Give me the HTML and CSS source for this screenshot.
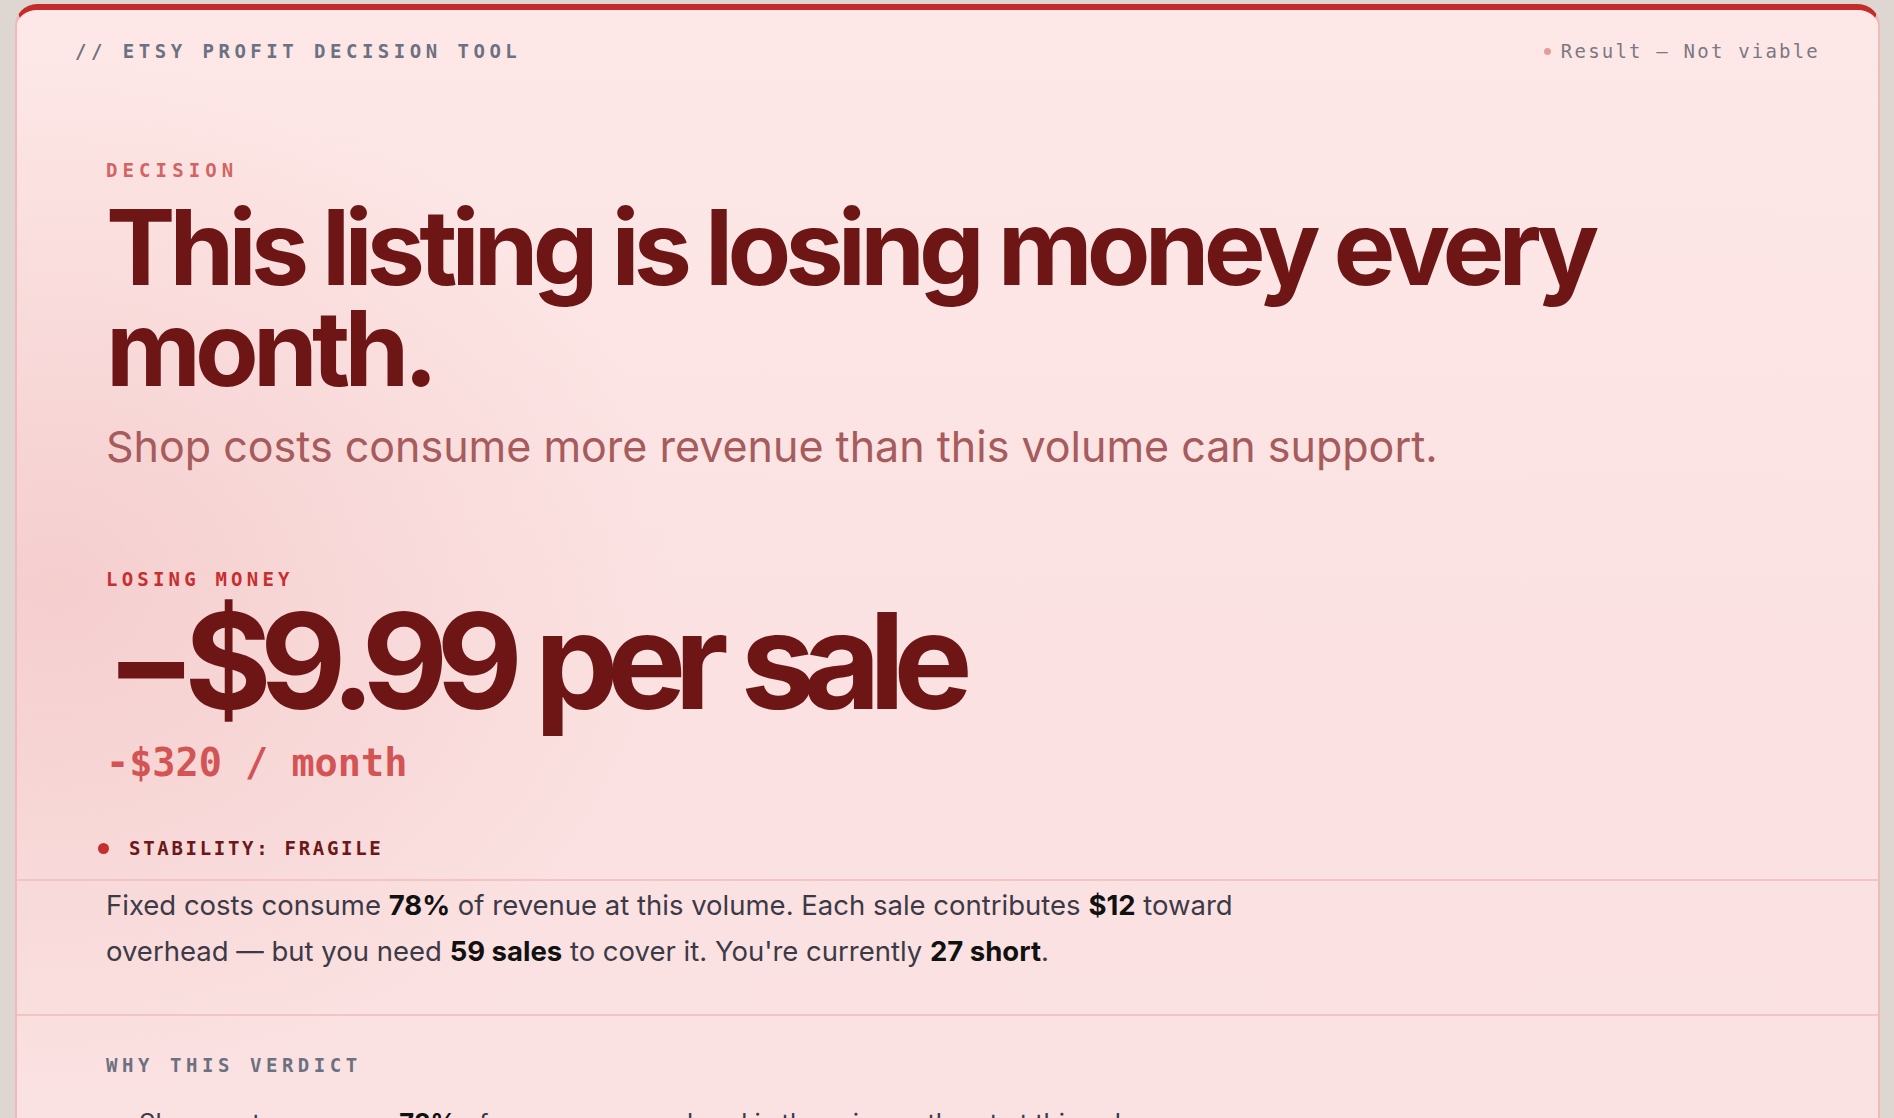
FILE: index.html
```html
<!DOCTYPE html>
<html lang="en">
<head>
<meta charset="utf-8">
<title>Etsy Profit Decision Tool</title>
<link rel="stylesheet" href="styles.css">
</head>
<body>
<main class="card">
  <header class="topbar">
    <div class="brand">// ETSY PROFIT DECISION TOOL</div>
    <div class="status"><span class="status-dot"></span>Result — Not viable</div>
  </header>

  <section class="decision">
    <div class="eyebrow">DECISION</div>
    <h1 class="headline">This listing is losing money every month.</h1>
    <p class="subline">Shop costs consume more revenue than this volume can support.</p>

    <div class="money-label">LOSING MONEY</div>
    <div class="big-number">−$9.99 per sale</div>
    <div class="monthly">-$320 / month</div>

    <div class="stability"><span class="stability-dot"></span>STABILITY: FRAGILE</div>
  </section>

  <section class="explain">
    <p>Fixed costs consume <b>78%</b> of revenue at this volume. Each sale contributes <b>$12</b> toward overhead — but you need <b>59 sales</b> to cover it. You're currently <b>27 short</b>.</p>
  </section>

  <section class="why">
    <div class="why-label">WHY THIS VERDICT</div>
    <ul class="why-list">
      <li>Shop costs consume <b>78%</b> of revenue — overhead is the primary threat at this volume.</li>
    </ul>
  </section>
</main>
</body>
</html>
```

FILE: styles.css
```css
html, body {
  height: 100%;
}
body {
  margin: 0;
  padding: 4px 14px 0 15px;
  background: #ddd6d1;
  font-family: Inter, "Noto Sans", sans-serif;
  box-sizing: border-box;
  overflow: hidden;
}
.card {
  min-height: 1200px;
  border: 2px solid #f1baba;
  border-top: 6px solid #c42b2b;
  border-radius: 22px 22px 0 0;
  background:
    radial-gradient(ellipse 620px 520px at 2% 48%, rgba(240, 190, 190, 0.55), rgba(240, 190, 190, 0) 100%),
    linear-gradient(180deg, #fde8e7 0%, #fbe1e1 60%, #fbe2e2 100%);
  box-sizing: border-box;
}
.topbar {
  display: flex;
  justify-content: space-between;
  align-items: center;
  padding: 29px 58px 0 58px;
  height: 24px;
}
.brand {
  font-family: "DejaVu Sans Mono", monospace;
  font-weight: bold;
  font-size: 19px;
  letter-spacing: 4.5px;
  color: #6c7181;
  line-height: 24px;
}
.status {
  display: flex;
  align-items: center;
  gap: 10px;
  font-family: "DejaVu Sans Mono", monospace;
  font-size: 19px;
  letter-spacing: 2.2px;
  color: #7b7883;
  line-height: 24px;
}
.status-dot {
  width: 7px;
  height: 7px;
  border-radius: 50%;
  background: #e39c9c;
}
.decision {
  padding: 0 90px 19px 89px;
  border-bottom: 2px solid #f3c4c4;
}
.eyebrow {
  margin-top: 95px;
  font-family: "DejaVu Sans Mono", monospace;
  font-weight: bold;
  font-size: 19px;
  letter-spacing: 5.1px;
  color: #d46464;
  line-height: 24px;
}
.headline {
  margin: 15px 0 0 0;
  font-family: Inter, sans-serif;
  font-weight: 700;
  font-size: 104px;
  line-height: 101px;
  letter-spacing: -0.056em;
  color: #6e1616;
  max-width: 1560px;
}
.subline {
  margin: 22px 0 0 0;
  font-family: Inter, sans-serif;
  font-weight: 400;
  font-size: 43px;
  line-height: 50px;
  letter-spacing: 0;
  color: #a65b5d;
}
.money-label {
  margin-top: 96px;
  font-family: "DejaVu Sans Mono", monospace;
  font-weight: bold;
  font-size: 19px;
  letter-spacing: 4.2px;
  color: #c62f2f;
  line-height: 24px;
}
.big-number {
  margin: 0;
  font-family: Inter, sans-serif;
  font-weight: 700;
  font-size: 133px;
  line-height: 140px;
  letter-spacing: -0.088em;
  word-spacing: 4px;
  color: #6e1616;
}
.monthly {
  margin-top: 9px;
  font-family: "DejaVu Sans Mono", monospace;
  font-weight: bold;
  font-size: 38.5px;
  line-height: 46px;
  letter-spacing: 0;
  color: #d35454;
}
.stability {
  margin: 50px 0 0 -8px;
  display: flex;
  align-items: center;
  gap: 20px;
  font-family: "DejaVu Sans Mono", monospace;
  font-weight: bold;
  font-size: 19px;
  letter-spacing: 2.7px;
  color: #6a1818;
  line-height: 24px;
}
.stability-dot {
  width: 11px;
  height: 11px;
  border-radius: 50%;
  background: #c62f2f;
}
.explain {
  padding: 1px 90px 40px 89px;
  border-bottom: 2px solid #f3c4c4;
}
.explain p {
  margin: 0;
  max-width: 1180px;
  font-family: Inter, sans-serif;
  font-size: 27.5px;
  line-height: 46px;
  letter-spacing: 0;
  color: #3c3a47;
}
.explain b, .why-list b {
  color: #111;
  font-weight: 700;
}
.why {
  padding: 37px 90px 0 89px;
}
.why-label {
  font-family: "DejaVu Sans Mono", monospace;
  font-weight: bold;
  font-size: 19px;
  letter-spacing: 4.55px;
  color: #6c7181;
  line-height: 24px;
}
.why-list {
  list-style: none;
  margin: 23px 0 0 0;
  padding: 0 0 0 33px;
}
.why-list li {
  font-family: Inter, sans-serif;
  font-size: 25.6px;
  line-height: 46px;
  letter-spacing: 0;
  color: #3c3a47;
}
```
